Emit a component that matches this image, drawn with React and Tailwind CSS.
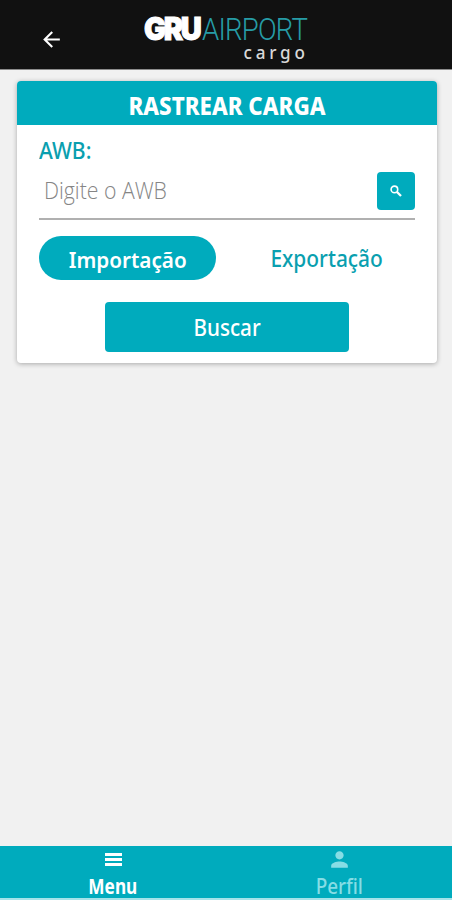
import React from 'react';
import { MdArrowBack, MdPerson } from 'react-icons/md';

const SearchIcon = () => (
  <svg width="12" height="12" viewBox="0 0 12 12" fill="none" stroke="currentColor">
    <circle cx="4.4" cy="4.4" r="3.3" strokeWidth="1.6" />
    <path d="M7 7l4 4" strokeWidth="2.3" />
  </svg>
);

const MenuIcon = () => (
  <svg className="my-[5px] shrink-0" width="17" height="13" viewBox="0 0 17 13" fill="currentColor">
    <path d="M0 0h17v3H0zM0 5h17v3H0zM0 10h17v3H0z" />
  </svg>
);

const Logo = () => (
  <div className="w-[168px] leading-none">
    <div className="flex h-[28px] items-start whitespace-nowrap">
      <span className="w-[58px] shrink-0">
        <span className="inline-block origin-left scale-x-[0.91] font-['Inter'] text-[32px] leading-[30px] font-black tracking-[-2.5px] text-white [-webkit-text-stroke:1px_white]">
          GRU
        </span>
      </span>
      <span className="inline-block origin-left scale-x-[0.89] font-['Roboto'] text-[31px] leading-[32px] font-light tracking-[-0.9px] text-[#269ca6]">
        AIRPORT
      </span>
    </div>
    <div className="mt-px pr-[3px] text-right text-[18px] leading-[18px] font-medium tracking-[4px] text-[#d8d8d8]">
      <span className="inline-block origin-right scale-x-[0.95]">cargo</span>
    </div>
  </div>
);

const Header = () => (
  <header className="flex h-[70px] shrink-0 border-b border-[#8c8c8c] bg-[#111111]">
    <button className="ml-[39px] mt-[27px] h-6 w-6 text-white">
      <MdArrowBack size={25} />
    </button>
    <div className="ml-[81px] mt-[14px]">
      <Logo />
    </div>
  </header>
);

const TrackCard = () => (
  <section className="mt-[11px] ml-[17px] h-[282px] w-[420px] overflow-hidden rounded bg-white shadow-[0_1px_5px_rgba(0,0,0,0.3)]">
    <h1 className="flex h-[44px] items-center justify-center bg-[#00abbd] pt-[6px] text-[24px] font-extrabold whitespace-nowrap text-white">
      <span className="inline-block scale-x-[0.93]">RASTREAR CARGA</span>
    </h1>

    <div className="px-[22px]">
      <div className="flex h-[39px] items-center pt-[11px] text-[24px] font-medium text-[#0a9faf]">
        <span className="inline-block origin-left scale-x-[0.88]">AWB:</span>
      </div>

      <div className="flex h-[56px] justify-between border-b-2 border-[#b0b0b0] pt-[8px]">
        <div className="pl-[5px] font-['Open_Sans'] text-[24px] leading-[36px] font-light text-[#858585]">
          <span className="inline-block origin-left scale-x-[0.885]">Digite o AWB</span>
        </div>
        <button className="flex h-[38px] w-[38px] items-center justify-center rounded bg-[#00abbd] text-white">
          <SearchIcon />
        </button>
      </div>

      <div className="mt-[16px] flex h-[44px]">
        <button className="flex w-[177px] items-center justify-center rounded-full bg-[#00abbd] pt-[2px] text-[22px] font-semibold text-white">
          <span className="inline-block scale-x-[0.94]">Importação</span>
        </button>
        <button className="flex flex-1 items-center justify-center pl-[23px] text-[24px] font-medium text-[#0a9faf]">
          <span className="inline-block scale-x-[0.87]">Exportação</span>
        </button>
      </div>

      <button className="mx-auto mt-[22px] flex h-[50px] w-[244px] items-center justify-center rounded bg-[#00abbd] text-[24px] font-medium text-white">
        <span className="inline-block scale-x-[0.86]">Buscar</span>
      </button>
    </div>
  </section>
);

const BottomNav = () => (
  <nav className="flex h-[54px] shrink-0 border-b-2 border-[#a5e3e9] bg-[#00abbd] text-[21px] leading-[26px]">
    <button className="flex flex-1 flex-col items-center pt-[2px] pl-px font-bold text-white">
      <MenuIcon />
      <span className="mt-[2px] inline-block scale-x-[0.82]">Menu</span>
    </button>
    <button className="flex flex-1 flex-col items-center pt-px pl-[2px] font-medium text-[#86dde5]">
      <MdPerson size={25} className="shrink-0" />
      <span className="mt-px inline-block scale-x-[0.9]">Perfil</span>
    </button>
  </nav>
);

const App = () => (
  <div className="flex h-[900px] w-[452px] flex-col bg-[#f1f1f1] font-['Noto_Sans',sans-serif]">
    <Header />
    <main className="flex-1">
      <TrackCard />
    </main>
    <BottomNav />
  </div>
);

export default App;
